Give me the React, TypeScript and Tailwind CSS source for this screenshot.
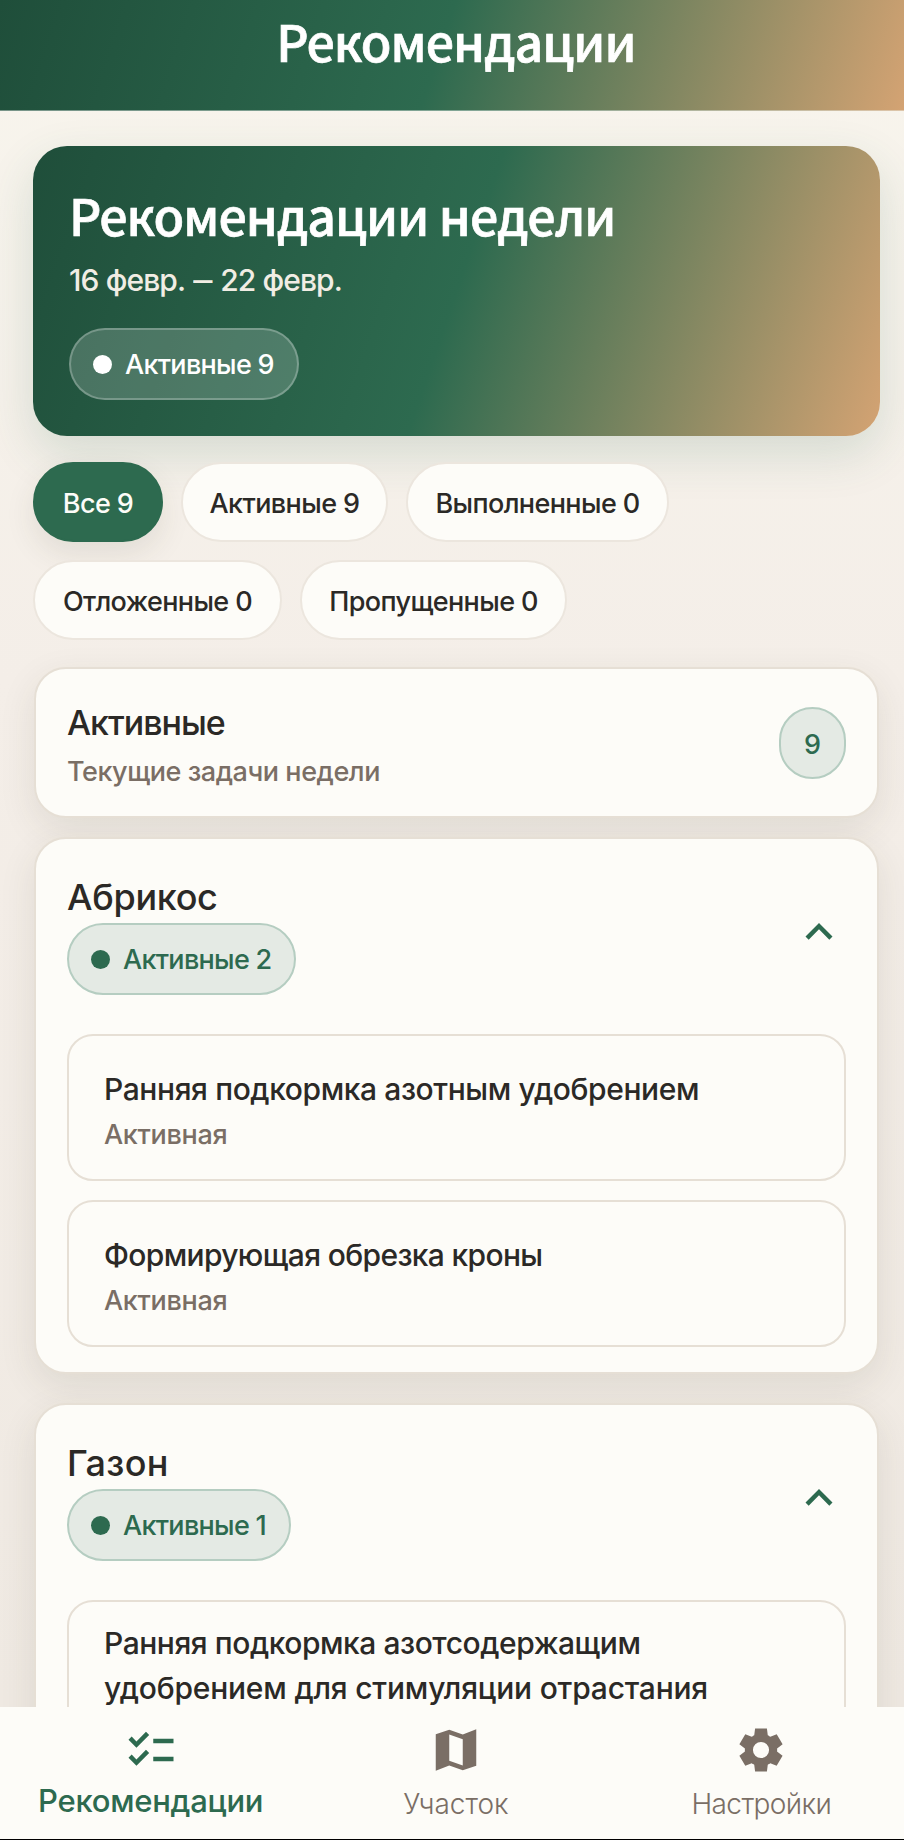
import type { ReactNode } from "react";
import clsx from "clsx";

type Filter = { label: string; className: string };
type Line = { text: string; tracking: string };
type Task = { title: Line[]; status?: string };
type Group = { name: string; nameClass: string; pill: string; pillClass: string; tasks: Task[] };

const FILTERS: Filter[] = [
  { label: "Все 9", className: "w-[130px]" },
  { label: "Активные 9", className: "w-[207px]" },
  { label: "Выполненные 0", className: "w-[263px]" },
  { label: "Отложенные 0", className: "w-[249px]" },
  { label: "Пропущенные 0", className: "w-[267px]" },
];

const GROUPS: Group[] = [
  {
    name: "Абрикос",
    nameClass: "tracking-[-0.3px]",
    pill: "Активные 2",
    pillClass: "w-[229px]",
    tasks: [
      {
        title: [{ text: "Ранняя подкормка азотным удобрением", tracking: "tracking-[-0.4px]" }],
        status: "Активная",
      },
      {
        title: [{ text: "Формирующая обрезка кроны", tracking: "tracking-[-0.65px]" }],
        status: "Активная",
      },
    ],
  },
  {
    name: "Газон",
    nameClass: "tracking-[0.3px]",
    pill: "Активные 1",
    pillClass: "w-[224px]",
    tasks: [
      {
        title: [
          { text: "Ранняя подкормка азотсодержащим", tracking: "tracking-[-0.45px]" },
          { text: "удобрением для стимуляции отрастания", tracking: "tracking-[-0.2px]" },
        ],
      },
    ],
  },
];

function Card({ className, children }: { className?: string; children: ReactNode }) {
  return (
    <div
      className={clsx(
        "mx-px rounded-[32px] border-2 border-[#e6dfd5] bg-[#fdfcf8] shadow-[0_12px_36px_rgba(60,60,40,0.10)]",
        className
      )}
    >
      {children}
    </div>
  );
}

function StatusPill({ label, className }: { label: string; className?: string }) {
  return (
    <div
      className={clsx(
        "flex h-[72px] items-center gap-[13px] rounded-full border-2 pl-[22px] text-[27px] font-medium tracking-[-0.7px] whitespace-nowrap",
        className
      )}
    >
      <span className="size-[19px] shrink-0 rounded-full bg-current" />
      <span className="pt-[3px]">{label}</span>
    </div>
  );
}

function TaskItem({ task }: { task: Task }) {
  const multiline = task.title.length > 1;

  return (
    <div
      className={clsx(
        "rounded-[26px] border-2 border-[#e6dfd5] pl-[35px]",
        multiline ? "h-[190px] pt-[19px]" : "h-[147px] pt-[31px]"
      )}
    >
      {task.title.map((line) => (
        <p key={line.text} className={clsx("text-[30px] leading-[45px] font-medium whitespace-nowrap", line.tracking)}>
          {line.text}
        </p>
      ))}
      {task.status && (
        <p className="text-[27px] leading-[45px] font-medium tracking-[-0.3px] text-[#7a6e65]">{task.status}</p>
      )}
    </div>
  );
}

function GroupCard({ group }: { group: Group }) {
  return (
    <Card className="px-[31px] pt-[33px] pb-[25px]">
      <div className="flex items-center justify-between">
        <div>
          <h3 className={clsx("text-[36px] leading-[51px] font-medium", group.nameClass)}>{group.name}</h3>
          <StatusPill
            label={group.pill}
            className={clsx("border-[#b5cdc1] bg-[#e4eae4] text-[#2d6a4f]", group.pillClass)}
          />
        </div>
        <svg className="mb-[4px] size-[54px] text-[#2d6a4f]" viewBox="0 0 24 24" fill="currentColor">
          <path d="m12 8-6 6 1.41 1.41L12 10.83l4.59 4.58L18 14z" />
        </svg>
      </div>
      <div className="mt-[39px] flex flex-col gap-[19px]">
        {group.tasks.map((task) => (
          <TaskItem key={task.title[0].text} task={task} />
        ))}
      </div>
    </Card>
  );
}

function BottomNav() {
  return (
    <nav className="relative z-10 -ml-[2px] flex h-[133px] w-[916px] border-b border-black bg-[#fdfcf8] pt-[16px] text-[#7a6e65]">
      <div className="flex flex-1 flex-col items-center text-[#2d6a4f]">
        <svg className="size-[54px]" viewBox="0 0 24 24" fill="currentColor">
          <path d="M22 7h-9v2h9V7zm0 8h-9v2h9v-2zM5.54 11 2 7.46l1.41-1.41 2.12 2.12 4.24-4.24 1.41 1.41L5.54 11zm0 8L2 15.46l1.41-1.41 2.12 2.12 4.24-4.24 1.41 1.41L5.54 19z" />
        </svg>
        <span className="text-[31px] leading-[48px] font-medium tracking-[-0.25px]">Рекомендации</span>
      </div>
      <div className="flex flex-1 flex-col items-center">
        <svg className="size-[54px]" viewBox="0 0 24 24" fill="currentColor">
          <path d="M15 5.1 9 3 3 5.02v16.2l6-2.33 6 2.1 6-2.02V2.77L15 5.1zm0 13.79-6-2.11V5.11l6 2.11v11.67z" />
        </svg>
        <span className="pt-[2px] text-[28px] leading-[50px] font-light">Участок</span>
      </div>
      <div className="flex flex-1 flex-col items-center">
        <svg className="size-[54px]" viewBox="-22 -982 1004 1004" fill="currentColor">
          <path d="m370-80-16-128q-13-5-24.5-12T307-235l-119 50L78-375l103-78q-1-7-1-13.5v-27q0-6.5 1-13.5L78-585l110-190 119 50q11-8 23-15t24-12l16-128h220l16 128q13 5 24.5 12t22.5 15l119-50 110 190-103 78q1 7 1 13.5v27q0 6.5-2 13.5l103 78-110 190-118-50q-11 8-23 15t-24 12L590-80H370Zm110-250q62 0 106-44t44-106q0-62-44-106t-106-44q-62 0-106 44t-44 106q0 62 44 106t106 44Z" />
        </svg>
        <span className="pt-[2px] text-[28px] leading-[50px] font-light tracking-[-0.6px]">Настройки</span>
      </div>
    </nav>
  );
}

export default function App() {
  return (
    <div className="h-[1840px] w-[904px] overflow-hidden bg-black font-['Inter','Noto_Sans',sans-serif] text-[#2b2926]">
      <div className="flex h-full w-[914px] flex-col">
        <div className="flex h-[1707px] flex-col overflow-hidden bg-linear-to-b from-[#f8f5ed] via-[#f4eee8] via-40% to-[#efe9e2]">
          <header className="flex h-[111px] shrink-0 justify-center border-b border-white/40 bg-[linear-gradient(108deg,#1f4e3a_0%,#2d6a4f_48%,#d4a373_99%)] pt-[9px] pr-[2px]">
            <h1 className="font-['Noto_Sans_CJK_SC','Noto_Sans',sans-serif] text-[50px] leading-[63px] font-medium tracking-[-0.9px] text-white [-webkit-text-stroke:0.7px_white]">
              Рекомендации
            </h1>
          </header>

          <main className="flex flex-col pt-[35px] pr-[34px] pl-[33px]">
            <section className="h-[290px] shrink-0 rounded-[34px] bg-[linear-gradient(108.9deg,#1f4e3a_0%,#2d6a4f_50%,#d4a373_100%)] px-[36px] pt-[36px] text-white shadow-[0_18px_48px_rgba(45,106,79,0.16)]">
              <h2 className="font-['Noto_Sans_CJK_SC','Noto_Sans',sans-serif] text-[50px] leading-[64px] font-medium tracking-[-0.9px] [-webkit-text-stroke:0.7px_white]">
                Рекомендации недели
              </h2>
              <p className="mt-[12px] text-[30px] leading-[44px] font-medium tracking-[-0.9px] text-[#f1ede4]">
                16 февр. <span className="-mx-[4px] inline-block scale-x-[0.64]">—</span> 22 февр.
              </p>
              <StatusPill label="Активные 9" className="mt-[26px] w-[230px] border-white/25 bg-white/18" />
            </section>

            <div className="mt-[26px] flex flex-wrap gap-[18px]">
              {FILTERS.map((filter, i) => (
                <button
                  key={filter.label}
                  className={clsx(
                    "h-[80px] rounded-full border-2 pt-[5px] text-[27px] font-medium tracking-[-0.6px] whitespace-nowrap",
                    i === 0
                      ? "border-[#2d6a4f] bg-[#2d6a4f] text-[#fdfcf8] shadow-[0_12px_30px_rgba(60,60,40,0.10)]"
                      : "border-[#ece6de] bg-[#fdfcf8]",
                    filter.className
                  )}
                >
                  {filter.label}
                </button>
              ))}
            </div>

            <Card className="mt-[27px] flex h-[151px] items-center justify-between px-[31px]">
              <div className="pt-[7px]">
                <h2 className="text-[34px] leading-[50px] font-medium tracking-[-1px]">Активные</h2>
                <p className="text-[27px] leading-[47px] font-medium tracking-[-0.45px] text-[#7a6e65]">
                  Текущие задачи недели
                </p>
              </div>
              <div className="flex h-[72px] w-[67px] items-center justify-center rounded-full border-2 border-[#b5cdc1] bg-[#e4eae4] pt-[5px] text-[27px] font-medium text-[#2d6a4f]">
                9
              </div>
            </Card>

            <div className="mt-[19px] flex flex-col gap-[29px]">
              {GROUPS.map((group) => (
                <GroupCard key={group.name} group={group} />
              ))}
            </div>
          </main>
        </div>
        <BottomNav />
      </div>
    </div>
  );
}
